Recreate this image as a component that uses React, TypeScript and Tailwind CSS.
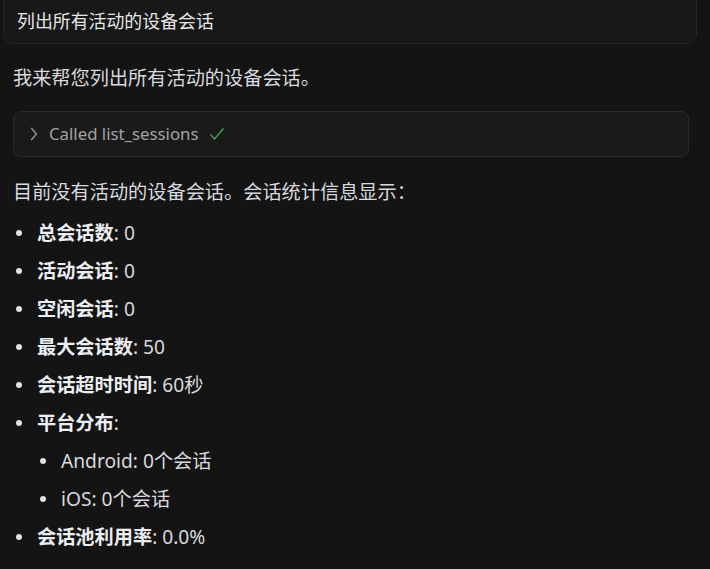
import React from "react";

const items: { b: string; v: string; sub?: string[] }[] = [
  { b: "总会话数", v: ": 0" },
  { b: "活动会话", v: ": 0" },
  { b: "空闲会话", v: ": 0" },
  { b: "最大会话数", v: ": 50" },
  { b: "会话超时时间", v: ": 60秒" },
  { b: "平台分布", v: ":", sub: ["Android: 0个会话", "iOS: 0个会话"] },
  { b: "会话池利用率", v: ": 0.0%" },
];

export default function App() {
  return (
    <div
      className="w-[710px] h-[569px] overflow-hidden bg-[#141414] text-[#d8dadf] text-[19.2px]"
      style={{ fontFamily: '"Segoe UI", "Noto Sans", "Noto Sans CJK SC", sans-serif' }}
    >
      <div className="ml-[3px] mr-[13px] -mt-[10px] h-[54px] rounded-[10px] border border-[#262626] bg-[#181818] pl-[13px] pt-[18px] text-[17.9px] text-[#e6e6e6] leading-[24px]">
        列出所有活动的设备会话
      </div>
      <div className="pl-[13px] pt-[20px] leading-[28px]">我来帮您列出所有活动的设备会话。</div>
      <div className="ml-[13px] mr-[21px] mt-[19px] h-[46px] rounded-[8px] border border-[#2a2a2a] bg-[#1a1a1a] flex items-center pl-[16px] text-[16.8px] text-[#a3a3a3]">
        <svg width="8" height="14" viewBox="0 0 8 14" className="mr-[11px]">
          <path d="M1.2 1 L6.5 7 L1.2 13" fill="none" stroke="#9a9a9a" strokeWidth="1.3" />
        </svg>
        <span>Called list_sessions</span>
        <svg width="16" height="16" viewBox="0 0 16 16" className="ml-[10px]">
          <path d="M1.5 8.5 L5.5 13 L14.5 2.5" fill="none" stroke="#4f9a5e" strokeWidth="1.4" />
        </svg>
      </div>
      <div className="pl-[13px] pt-[21px] leading-[28px]">目前没有活动的设备会话。会话统计信息显示：</div>
      <ul className="pt-[8px] pl-[13px]">
        {items.map((it) => (
          <li key={it.b}>
            <div className="flex items-center h-[38px]">
              <span className="w-[6px] h-[6px] rounded-full bg-[#dcdfe4] ml-[3px] mr-[15px]" />
              <span>
                <b className="font-bold text-[#eceef2]">{it.b}</b>
                {it.v}
              </span>
            </div>
            {it.sub &&
              it.sub.map((s) => (
                <div key={s} className="flex items-center h-[38px] pl-[27px]">
                  <span className="w-[6px] h-[6px] rounded-full bg-[#dcdfe4] mr-[15px]" />
                  <span>{s}</span>
                </div>
              ))}
          </li>
        ))}
      </ul>
    </div>
  );
}
